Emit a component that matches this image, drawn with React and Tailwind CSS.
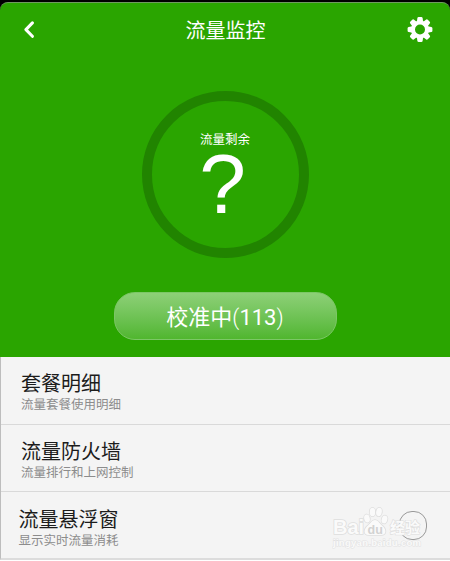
import { useState } from "react";

const rows = [
  { title: "套餐明细", desc: "流量套餐使用明细", pad: "pl-5" },
  { title: "流量防火墙", desc: "流量排行和上网控制", pad: "pl-5" },
  { title: "流量悬浮窗", desc: "显示实时流量消耗", pad: "pl-[17.5px]", toggle: true },
];

export default function App() {
  const [floating, setFloating] = useState(false);

  return (
    <div className="h-[561px] w-[450px] overflow-hidden bg-white font-['Roboto','Noto_Sans_CJK_SC',sans-serif]">
      <div className="bg-black pt-[2px]">
        <section className="flex h-[355px] flex-col items-center rounded-t-[8px] border-t border-[#6f9a60] bg-[#2aa500] text-white">
          <header className="flex h-[54px] w-full items-center justify-between pr-[17px] pl-[22px]">
            <button aria-label="返回" className="w-[22px]">
              <BackIcon />
            </button>
            <h1 className="pt-[2px] text-[20px] leading-[30px]">流量监控</h1>
            <button aria-label="设置">
              <GearIcon />
            </button>
          </header>

          <div className="mt-[34px] flex h-[167px] w-[167px] flex-col items-center rounded-full border-[10px] border-[#218400]">
            <span className="mt-[32px] text-[12.5px] leading-[14px]">流量剩余</span>
            <span className="mt-[5px] -ml-[5px] font-['Liberation_Sans',sans-serif] text-[84px] leading-[64px]">?</span>
          </div>

          <button className="mt-[34px] h-[48px] w-[223px] rounded-[21px] border border-[#7cc766] bg-linear-to-b from-[#8dd077] to-[#50b62e] pt-[3px] text-[22px] leading-[43px]">
            校准中<span className="font-light">(</span>113<span className="font-light">)</span>
          </button>
        </section>
      </div>

      <ul className="h-[203px] border-b-2 border-l border-b-[#dcdcdc] border-l-[#bdbdbd] bg-[#f4f4f4]">
        {rows.map((row) => (
          <li
            key={row.title}
            className={`flex h-[67.5px] items-center justify-between border-b border-[#d9d9d9] last:border-b-0 ${row.pad}`}
          >
            <div className="pt-[6px]">
              <p className="text-[20px] leading-[24px] text-[#1c1c1c]">{row.title}</p>
              <p className="text-[12.5px] leading-[18px] text-[#8c8c8c]">{row.desc}</p>
            </div>
            {row.toggle && (
              <div className="relative mr-[23px]">
                <button
                  role="switch"
                  aria-checked={floating}
                  aria-label={row.title}
                  onClick={() => setFloating(!floating)}
                  className={`block h-[29px] w-[28px] rounded-[13px] border-[1.5px] border-[#999] ${
                    floating ? "bg-[#2aa500]" : ""
                  }`}
                />
                <Watermark />
              </div>
            )}
          </li>
        ))}
      </ul>
    </div>
  );
}

function BackIcon() {
  return (
    <svg width="14" height="18" viewBox="0 0 14 18" fill="none">
      <path d="M10.4 1.900 3.900 8.600l6.500 6.700" stroke="#fff" strokeWidth="3" strokeLinecap="round" strokeLinejoin="round" />
    </svg>
  );
}

function GearIcon() {
  return (
    <svg width="26" height="26" viewBox="-13 -12.5 26 26">
      <g fill="#fff">
        {[0, 45, 90, 135, 180, 225, 270, 315].map((a) => (
          <path key={a} d="M-3.2-7.5-2.6-11.4Q-2.4-12.4-1.4-12.4H1.4Q2.4-12.4 2.6-11.4L3.2-7.5Z" transform={`rotate(${a})`} />
        ))}
      </g>
      <circle r="7" fill="none" stroke="#fff" strokeWidth="4" />
    </svg>
  );
}

// site mark lying over the last row
function Watermark() {
  return (
    <svg
      width="96"
      height="50"
      viewBox="0 0 96 50"
      className="pointer-events-none absolute top-[-6px] left-[-67px]"
      fill="#fafafa"
      stroke="#dedede"
      strokeWidth="1.6"
      paintOrder="stroke"
      fontFamily="'Liberation Sans', 'Noto Sans CJK SC', sans-serif"
      fontWeight="bold"
    >
      <text x="1" y="29" fontSize="20">Bai</text>
      <path d="M43 15c-3 0-4 3-7 5.500-4 3-5.500 9.500 1 9.500h12c6.500 0 5-6.500 1-9.500-3-2.500-4-5.500-7-5.500Z" />
      <ellipse cx="35" cy="13.500" rx="2.800" ry="4" transform="rotate(-12 35 13.500)" />
      <ellipse cx="40.500" cy="7" rx="2.800" ry="4.300" />
      <ellipse cx="47" cy="7" rx="2.800" ry="4.300" transform="rotate(10 47 7)" />
      <ellipse cx="52.500" cy="14.500" rx="2.800" ry="4" transform="rotate(16 52.500 14.500)" />
      <text x="35.500" y="28.500" fontSize="12.500" fill="#d2d2d2" stroke="none">du</text>
      <text x="58" y="28" fontSize="15" strokeWidth="1.200">经验</text>
      <text x="1" y="41" fontSize="9.500" strokeWidth="1" stroke="#e2e2e2" textLength="88">jingyan.baidu.com</text>
    </svg>
  );
}
